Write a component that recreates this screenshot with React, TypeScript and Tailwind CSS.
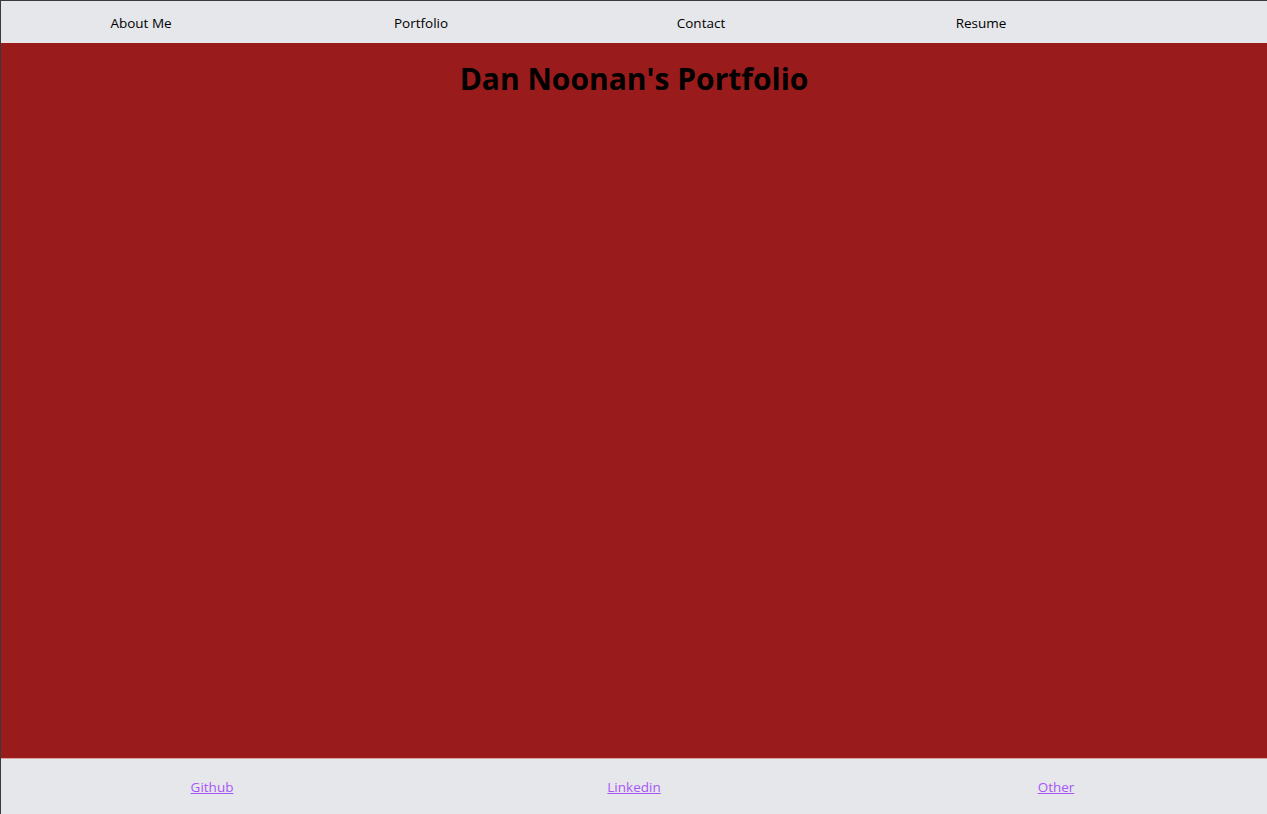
import React from 'react';

const navItems = ['About Me', 'Portfolio', 'Contact', 'Resume'];
const links = ['Github', 'Linkedin', 'Other'];

export default function App() {
  return (
    <div
      className="flex h-[814px] flex-col border-l border-t border-[#3a3a3a] bg-[#991b1b]"
      style={{ fontFamily: '"Open Sans", "Noto Sans", sans-serif' }}
    >
      <nav className="flex h-[42px] items-center bg-[#e5e7eb] pt-[2px] text-[13.5px] text-black">
        {navItems.map((item) => (
          <span key={item} className="w-[280px] text-center">
            {item}
          </span>
        ))}
      </nav>
      <main className="flex-1 bg-[#991b1b]">
        <h1 className="pt-[14px] text-center text-[30px] font-bold leading-[44px] text-black">
          Dan Noonan's Portfolio
        </h1>
      </main>
      <footer className="grid h-[56px] grid-cols-3 items-center border-t border-[#d6a4a4] bg-[#e5e7eb] pt-[2px] text-[13.5px]">
        {links.map((link) => (
          <a key={link} href="#" className="text-center text-[#a855f7] underline">
            {link}
          </a>
        ))}
      </footer>
    </div>
  );
}
